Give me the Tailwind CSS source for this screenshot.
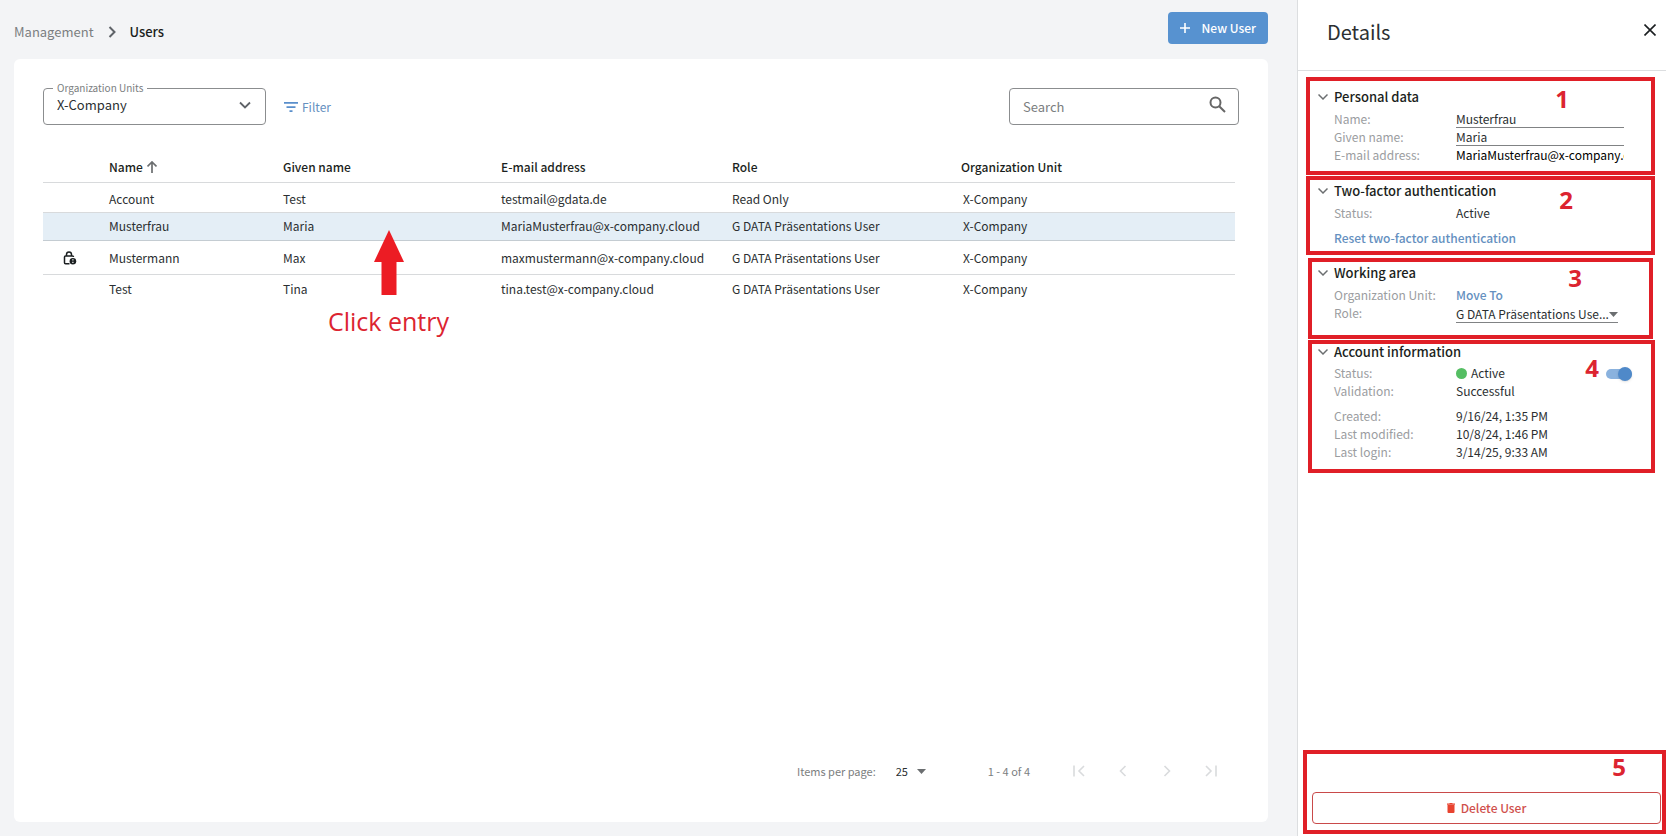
<!DOCTYPE html>
<html lang="en">
<head>
  <meta charset="UTF-8">
  <meta name="viewport" content="width=device-width, initial-scale=1.0">
  <script src="https://cdn.jsdelivr.net/npm/@tailwindcss/browser@4"></script>
  <title>Users</title>
</head>
<body class="flex h-screen overflow-hidden bg-[#f3f4f6] font-['Noto_Sans_CJK_SC',sans-serif] text-xs text-[#2b2f31]">
  <main class="flex flex-1 flex-col pl-3.5 pr-[29px] pb-3.5">
    <header class="flex h-[59px] shrink-0 items-start justify-between pt-3">
      <nav class="flex h-10 items-center text-[13px]" aria-label="Breadcrumb">
        <a href="#" class="text-[#7b7e80]">Management</a>
        <svg class="mx-3 size-3" viewBox="0 0 12 12" fill="none" stroke="#5f6368" stroke-width="2"><path d="M3.500 1 8.500 6 3.500 11"/></svg>
        <span class="font-medium text-[#1b1f21]">Users</span>
      </nav>
      <button class="flex h-8 items-center gap-3 rounded bg-[#5792d0] px-3 font-medium text-white">
        <svg class="size-2.5" viewBox="0 0 10 10" stroke="currentColor" stroke-width="1.600"><path d="M5 0V10M0 5H10"/></svg>
        New User
      </button>
    </header>

    <section class="relative flex flex-1 flex-col rounded-md bg-white pt-[29px]">
      <div class="flex items-center pl-[29px] pr-[29px]">
        <div class="relative w-[223px]">
          <label for="unit" class="absolute left-2.5 -top-2 bg-white px-1 text-[10px] leading-4 text-[#7b7e80]">Organization Units</label>
          <select id="unit" class="h-[37px] w-full appearance-none rounded border border-[#8b8d8f] bg-transparent pb-1 pl-[13px] text-[13px]">
            <option>X-Company</option>
          </select>
          <svg class="pointer-events-none absolute right-[15px] top-[11px] size-3" viewBox="0 0 12 12" fill="none" stroke="#5f6368" stroke-width="1.800"><path d="M1 3.500 6 8.500 11 3.500"/></svg>
        </div>
        <button class="ml-[18px] flex items-center gap-1 text-[#6590c0]">
          <svg class="h-2.5 w-3.5" viewBox="0 0 14 10" fill="#5a8fcb"><path d="M0 0H14V1.700H0ZM2.500 4.200H11.500V5.900H2.500ZM5.500 8.300H8.500V10H5.500Z"/></svg>
          Filter
        </button>
        <div class="relative ml-auto w-[230px]">
          <input type="text" aria-label="Search" placeholder="Search" class="h-[37px] w-full rounded border border-[#8b8d8f] pl-[13px] pr-10 text-[13px] placeholder:text-[#7b7e80]">
          <svg class="absolute right-[13px] top-2 size-[17px]" viewBox="0 0 17 17" fill="none" stroke="#666" stroke-width="2"><circle cx="6.500" cy="6.500" r="5"/><path d="M10.200 10.200 16 16"/></svg>
        </div>
      </div>

      <div class="pl-[29px] pr-[33px] pt-[27px]">
        <table class="w-full table-fixed text-left">
          <colgroup>
            <col class="w-[66px]"><col class="w-[174px]"><col class="w-[218px]"><col class="w-[231px]"><col class="w-[229px]"><col>
          </colgroup>
          <thead>
            <tr class="h-[30px] border-b border-[#d8dadc] text-[#1b1f21]">
              <td></td>
              <th class="font-medium">
                <span class="flex items-center gap-1">Name
                  <svg class="h-3 w-2.5" viewBox="0 0 10 12" fill="none" stroke="#6b6e70" stroke-width="1.700"><path d="M5 12V1M.500 5.500 5 1 9.500 5.500"/></svg>
                </span>
              </th>
              <th class="font-medium">Given name</th>
              <th class="font-medium">E-mail address</th>
              <th class="font-medium">Role</th>
              <th class="font-medium">Organization Unit</th>
            </tr>
          </thead>
          <tbody>
            <tr class="h-[30px] border-b border-[#d8dadc] *:pt-1">
              <td></td><td>Account</td><td>Test</td><td>testmail@gdata.de</td><td>Read Only</td><td class="pl-0.5">X-Company</td>
            </tr>
            <tr class="h-7 border-b border-[#c4ccd2] bg-[#e4eef6]">
              <td></td><td>Musterfrau</td><td>Maria</td><td>MariaMusterfrau@x-company.cloud</td><td>G DATA Präsentations User</td><td class="pl-0.5">X-Company</td>
            </tr>
            <tr class="h-[34px] border-b border-[#d8dadc] *:pt-0.5">
              <td>
                <svg class="ml-5 h-3.5 w-3.5" viewBox="0 0 14 14" fill="none" stroke="#1b1f21" stroke-width="1.500"><path d="M6.500 12.800H2.500Q1.500 12.800 1.500 11.800V6Q1.500 5 2.500 5H9.500Q10.500 5 10.500 6M3.500 5V3.500A2.500 2.600 0 0 1 8.500 3.500V5"/><circle cx="9.900" cy="10.300" r="3.300" fill="#1b1f21" stroke="none"/><path d="M9.900 8.300V9.500M9.900 10.700V12" stroke="#fff" stroke-width="1.200"/></svg>
              </td>
              <td>Mustermann</td><td>Max</td><td>maxmustermann@x-company.cloud</td><td>G DATA Präsentations User</td><td class="pl-0.5">X-Company</td>
            </tr>
            <tr class="h-[30px]">
              <td></td><td>Test</td><td>Tina</td><td>tina.test@x-company.cloud</td><td>G DATA Präsentations User</td><td class="pl-0.5">X-Company</td>
            </tr>
          </tbody>
        </table>
      </div>

      <div class="absolute left-[314px] top-[171px] flex flex-col items-center text-[#dc2430]">
        <svg class="h-[65px] w-[30px]" viewBox="0 0 30 65" fill="#ec1c24"><path d="M15 0 30 32H22.500V65H7.500V32H0Z"/></svg>
        <span class="mt-2 font-['Open_Sans',sans-serif] text-[25px] leading-9">Click entry</span>
      </div>

      <footer class="mt-auto flex items-center justify-end pb-[41px] pr-[51px] text-[11px] leading-5 text-[#7b7e80]">
        <label for="pageSize">Items per page:</label>
        <div class="relative ml-5 w-[30px]">
          <select id="pageSize" class="w-full appearance-none bg-transparent text-[#2b2f31]">
            <option>25</option>
          </select>
          <svg class="pointer-events-none absolute right-0 top-2 h-[5px] w-[9px]" viewBox="0 0 9 5" fill="#6b6e70"><path d="M0 0H9L4.500 5Z"/></svg>
        </div>
        <span class="ml-[62px]">1 - 4 of 4</span>
        <div class="ml-[43px] flex gap-8 text-[#d9dbdd]">
          <button aria-label="First page"><svg class="size-3" viewBox="0 0 12 12" fill="none" stroke="currentColor" stroke-width="1.600"><path d="M1 .500V11.500M11 1 6 6 11 11"/></svg></button>
          <button aria-label="Previous page"><svg class="size-3" viewBox="0 0 12 12" fill="none" stroke="currentColor" stroke-width="1.600"><path d="M8.500 1 3.500 6 8.500 11"/></svg></button>
          <button aria-label="Next page"><svg class="size-3" viewBox="0 0 12 12" fill="none" stroke="currentColor" stroke-width="1.600"><path d="M3.500 1 8.500 6 3.500 11"/></svg></button>
          <button aria-label="Last page"><svg class="size-3" viewBox="0 0 12 12" fill="none" stroke="currentColor" stroke-width="1.600"><path d="M11 .500V11.500M1 1 6 6 1 11"/></svg></button>
        </div>
      </footer>
    </section>
  </main>

  <aside class="flex w-[369px] shrink-0 flex-col border-l border-[#dcdee0] bg-white leading-[18px]">
    <header class="flex h-[71px] shrink-0 items-start justify-between border-b border-[#dcdee0] pl-[29px] pr-2.5 pt-4">
      <h2 class="text-xl leading-8">Details</h2>
      <button aria-label="Close" class="mt-2"><svg class="size-3" viewBox="0 0 12 12" stroke="#1b1f21" stroke-width="1.600"><path d="M.500.500 11.500 11.500M11.500.500.500 11.500"/></svg></button>
    </header>

    <div class="pl-2 pr-[11px] pt-1.5">
      <section class="relative border-4 border-[#e01f27] pb-[7px] pl-2 pt-2">
        <h3 class="flex h-4 items-center gap-1.5 text-[13px] font-medium text-[#1b1f21]">
          <svg class="size-2.5" viewBox="0 0 10 10" fill="none" stroke="#6b6e70" stroke-width="1.500"><path d="M.500 2.500 5 7 9.500 2.500"/></svg>
          Personal data
        </h3>
        <div class="mt-[5px] grid grid-cols-[122px_168px] pl-4">
          <label for="name" class="text-[#9b9d9f]">Name:</label>
          <input id="name" type="text" value="Musterfrau" class="h-[18px] border-b border-[#808284]">
          <label for="givenName" class="text-[#9b9d9f]">Given name:</label>
          <input id="givenName" type="text" value="Maria" class="h-[18px] border-b border-[#808284]">
          <label for="email" class="text-[#9b9d9f]">E-mail address:</label>
          <input id="email" type="text" value="MariaMusterfrau@x-company.cloud" class="h-[18px] text-black">
        </div>
        <span class="absolute right-[82px] top-2 font-['Open_Sans',sans-serif] text-2xl leading-5 font-bold text-[#dc2430]">1</span>
      </section>

      <section class="relative mt-px border-4 border-[#e01f27] pb-1 pl-2 pt-[3px]">
        <h3 class="flex h-4 items-center gap-1.5 text-[13px] font-medium text-[#1b1f21]">
          <svg class="size-2.5" viewBox="0 0 10 10" fill="none" stroke="#6b6e70" stroke-width="1.500"><path d="M.500 2.500 5 7 9.500 2.500"/></svg>
          Two-factor authentication
        </h3>
        <dl class="mt-[5px] grid grid-cols-[122px_168px] pl-4">
          <dt class="text-[#9b9d9f]">Status:</dt><dd>Active</dd>
        </dl>
        <a href="#" class="ml-4 mt-[7px] block font-medium text-[#6590c0]">Reset two-factor authentication</a>
        <span class="absolute right-[78px] top-2.5 font-['Open_Sans',sans-serif] text-2xl leading-5 font-bold text-[#dc2430]">2</span>
      </section>

      <section class="relative mx-0.5 mt-[3px] border-4 border-[#e01f27] pb-3 pl-1.5 pt-[3px]">
        <h3 class="flex h-4 items-center gap-1.5 text-[13px] font-medium text-[#1b1f21]">
          <svg class="size-2.5" viewBox="0 0 10 10" fill="none" stroke="#6b6e70" stroke-width="1.500"><path d="M.500 2.500 5 7 9.500 2.500"/></svg>
          Working area
        </h3>
        <div class="mt-[5px] grid grid-cols-[122px_162px] pl-4">
          <span class="text-[#9b9d9f]">Organization Unit:</span>
          <a href="#" class="font-medium text-[#6590c0]">Move To</a>
          <label for="role" class="text-[#9b9d9f]">Role:</label>
          <div class="relative">
            <select id="role" class="block h-[19px] w-full appearance-none border-b border-[#808284] pr-2 pt-px">
              <option>G DATA Präsentations Use...</option>
            </select>
            <svg class="pointer-events-none absolute right-0 top-2 h-[5px] w-[9px]" viewBox="0 0 9 5" fill="#6b6e70"><path d="M0 0H9L4.500 5Z"/></svg>
          </div>
        </div>
        <span class="absolute right-[67px] top-1.5 font-['Open_Sans',sans-serif] text-2xl leading-5 font-bold text-[#dc2430]">3</span>
      </section>

      <section class="relative ml-0.5 mt-px border-4 border-[#e01f27] pb-2 pl-1.5">
        <h3 class="flex h-4 items-center gap-1.5 text-[13px] font-medium text-[#1b1f21]">
          <svg class="size-2.5" viewBox="0 0 10 10" fill="none" stroke="#6b6e70" stroke-width="1.500"><path d="M.500 2.500 5 7 9.500 2.500"/></svg>
          Account information
        </h3>
        <dl class="mt-1 grid grid-cols-[122px_168px] pl-4">
          <dt class="text-[#9b9d9f]">Status:</dt>
          <dd class="flex items-center gap-1"><span class="size-[11px] rounded-full bg-[#55be63]"></span>Active</dd>
          <dt class="text-[#9b9d9f]">Validation:</dt><dd>Successful</dd>
        </dl>
        <dl class="mt-[7px] grid grid-cols-[122px_168px] pl-4">
          <dt class="text-[#9b9d9f]">Created:</dt><dd>9/16/24, 1:35 PM</dd>
          <dt class="text-[#9b9d9f]">Last modified:</dt><dd>10/8/24, 1:46 PM</dd>
          <dt class="text-[#9b9d9f]">Last login:</dt><dd>3/14/25, 9:33 AM</dd>
        </dl>
        <label class="absolute right-[19px] top-[23px] flex h-3.5 w-[26px] items-center">
          <input type="checkbox" checked aria-label="Account active" class="h-2.5 w-full appearance-none rounded-full bg-[#8ab2de]">
          <span class="absolute right-0 size-3.5 rounded-full bg-[#4f89c9] shadow"></span>
        </label>
        <span class="absolute right-[52px] top-3.5 font-['Open_Sans',sans-serif] text-2xl leading-5 font-bold text-[#dc2430]">4</span>
      </section>
    </div>

    <div class="relative ml-[5px] mt-auto mb-0.5 border-4 border-[#e01f27] pb-1.5 pl-[5px] pr-px pt-[38px]">
      <button class="flex h-8 w-full items-center justify-center gap-1.5 rounded border border-[#c94a4a] font-medium text-[#d0504c]">
        <svg class="h-2.5 w-2" viewBox="0 0 8 10" fill="#e8432f"><path d="M0 .600H2.300L2.800 0H5.200L5.700.600H8V1.700H0ZM.500 2H7.500V9Q7.500 10 6.500 10H1.500Q.500 10 .500 9Z"/></svg>
        Delete User
      </button>
      <span class="absolute right-[36px] top-[3px] font-['Open_Sans',sans-serif] text-2xl leading-5 font-bold text-[#dc2430]">5</span>
    </div>
  </aside>
</body>
</html>
